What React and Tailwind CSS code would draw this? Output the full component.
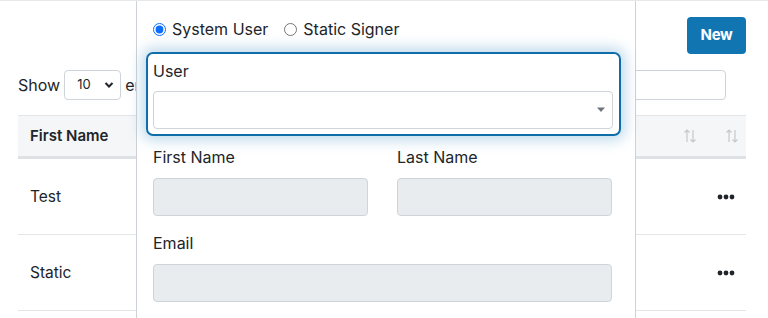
import React from 'react';

const font = { fontFamily: 'Inter, "Noto Sans", sans-serif' };

const SortIcon = () => (
    <svg width="14" height="16" viewBox="0 0 14 16" fill="none" stroke="#c4c8cd" strokeWidth="1.2">
        <path d="M4 14V2M1.5 4.5L4 2l2.5 2.5" />
        <path d="M10 2v12M7.5 11.5L10 14l2.5-2.5" />
    </svg>
);

const Dots = () => (
    <svg width="18" height="6" viewBox="0 0 18 6" fill="#212529">
        <circle cx="3" cy="3" r="2.4" />
        <circle cx="9" cy="3" r="2.4" />
        <circle cx="15" cy="3" r="2.4" />
    </svg>
);

const Row = ({ name }) => (
    <div className="flex items-center justify-between h-[76px] border-b border-[#e3e5e8] pl-3 pr-[11px]">
        <span className="text-[15.5px] text-[#212529]">{name}</span>
        <Dots />
    </div>
);

const App = () => {
    return (
        <div className="relative w-[768px] h-[318px] overflow-hidden bg-white border-t border-[#e6e8eb]" style={font}>
            {/* Background list page */}
            <div className="flex justify-end pt-4 pr-[22px]">
                <button className="w-[59px] h-[37px] rounded bg-[#1175b2] text-white font-bold text-[15px] tracking-tight">New</button>
            </div>
            <div className="flex items-center justify-between pl-[18px] pr-[42px] mt-4">
                <div className="flex items-center gap-[4px] text-[16px] text-[#212529]">
                    <span>Show</span>
                    <div className="w-[57px] h-[30px] border border-[#ced4da] rounded flex items-center justify-between pl-[12px] pr-[6px] text-[13px]">
                        <span>10</span>
                        <svg width="10" height="8" viewBox="0 0 10 8" fill="none" stroke="#212529" strokeWidth="2">
                            <path d="M1.5 2l3.5 3.5L8.5 2" />
                        </svg>
                    </div>
                    <span>entries</span>
                </div>
                <div className="w-[300px] h-[30px] border border-[#ced4da] rounded" />
            </div>
            <div className="ml-[18px] mr-[22px] mt-[15px]">
                <div className="flex items-center justify-between h-[44px] bg-[#f5f6f8] border-t border-[#e3e5e8] border-b-[3px] border-b-[#dee2e6] pl-3 pr-[7px]">
                    <span className="font-semibold text-[15px] text-[#212529]">First Name</span>
                    <div className="flex items-center gap-7">
                        <SortIcon />
                        <SortIcon />
                    </div>
                </div>
                <Row name="Test" />
                <Row name="Static" />
            </div>

            {/* Modal panel overlay */}
            <div className="absolute top-0 left-[136px] w-[500px] h-[318px] bg-white border-x border-[#cfd2d6]">
                <div className="flex items-center gap-4 pl-4 pt-[17px] text-[16px] leading-[22px] text-[#212529]">
                    <label className="flex items-center gap-[6px]">
                        <input type="radio" name="kind" defaultChecked className="w-[13px] h-[13px] m-0 accent-[#0d6efd]" />
                        System User
                    </label>
                    <label className="flex items-center gap-[6px]">
                        <input type="radio" name="kind" className="w-[13px] h-[13px] m-0" />
                        Static Signer
                    </label>
                </div>
                <div className="mt-[12px] ml-[9px] w-[475px] h-[84px] border-2 border-[#0f6eaa] rounded-[7px] pl-[5px] pr-[6px] pt-[6px] shadow-[0_0_14px_4px_rgba(17,117,178,0.28)]">
                    <div className="text-[16px] text-[#212529] leading-[22px]">User</div>
                    <div className="mt-[9px] h-[38px] border border-[#ced4da] rounded flex items-center justify-end pr-[6px]">
                        <svg width="10" height="6" viewBox="0 0 10 6" fill="#6c757d">
                            <path d="M1 0.5h8L5 5z" />
                        </svg>
                    </div>
                </div>
                <div className="grid grid-cols-2 gap-[29px] pl-4 pr-[23px] mt-[10px]">
                    <div>
                        <div className="text-[16px] text-[#212529] leading-[22px]">First Name</div>
                        <div className="mt-[10px] h-[38px] rounded border border-[#ced4da] bg-[#e9ecef]" />
                    </div>
                    <div>
                        <div className="text-[16px] text-[#212529] leading-[22px]">Last Name</div>
                        <div className="mt-[10px] h-[38px] rounded border border-[#ced4da] bg-[#e9ecef]" />
                    </div>
                </div>
                <div className="pl-4 pr-[23px] mt-[16px]">
                    <div className="text-[16px] text-[#212529] leading-[22px]">Email</div>
                    <div className="mt-[10px] h-[38px] rounded border border-[#ced4da] bg-[#e9ecef]" />
                </div>
            </div>
        </div>
    );
};

export default App;
